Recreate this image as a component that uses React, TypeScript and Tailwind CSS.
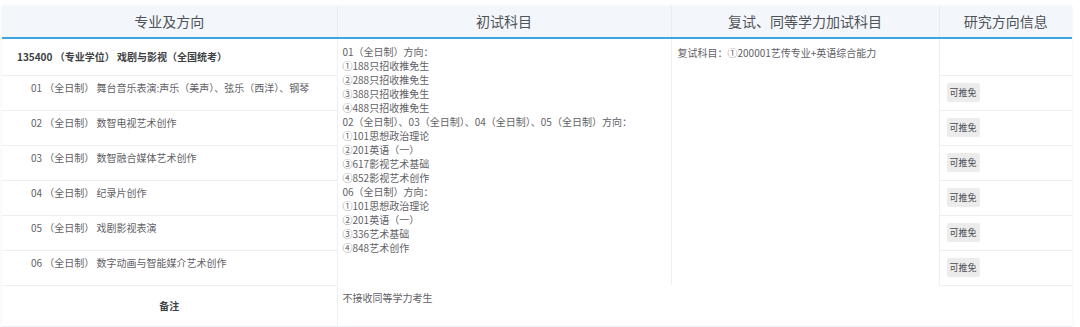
import React from "react";

const majors = [
  "01 （全日制） 舞台音乐表演:声乐（美声）、弦乐（西洋）、钢琴",
  "02 （全日制） 数智电视艺术创作",
  "03 （全日制） 数智融合媒体艺术创作",
  "04 （全日制） 纪录片创作",
  "05 （全日制） 戏剧影视表演",
  "06 （全日制） 数字动画与智能媒介艺术创作",
];

const firstExam = [
  "01（全日制）方向：",
  "①188只招收推免生",
  "②288只招收推免生",
  "③388只招收推免生",
  "④488只招收推免生",
  "02（全日制）、03（全日制）、04（全日制）、05（全日制）方向：",
  "①101思想政治理论",
  "②201英语（一）",
  "③617影视艺术基础",
  "④852影视艺术创作",
  "06（全日制）方向：",
  "①101思想政治理论",
  "②201英语（一）",
  "③336艺术基础",
  "④848艺术创作",
];

const App: React.FC = () => {
  return (
    <div className="w-[1080px] h-[327px] bg-white pt-[6px] px-[2px] font-['Noto_Sans_CJK_SC','Noto_Sans',sans-serif] text-[#5f6166]">
      <table className="w-[1070px] table-fixed border-collapse shadow-[0_0_4px_rgba(0,0,0,0.06)]">
        <colgroup>
          <col className="w-[335px]" />
          <col className="w-[334px]" />
          <col className="w-[268px]" />
          <col className="w-[133px]" />
        </colgroup>
        <thead>
          <tr className="h-[32px] bg-[#f3f7fc] border-b-2 border-[#3aa6dd]">
            <th className="font-normal text-[14px] text-[#505357] border-r border-[#e9edf2]">专业及方向</th>
            <th className="font-normal text-[14px] text-[#505357] border-r border-[#e9edf2]">初试科目</th>
            <th className="font-normal text-[14px] text-[#505357] border-r border-[#e9edf2]">复试、同等学力加试科目</th>
            <th className="font-normal text-[14px] text-[#505357]">研究方向信息</th>
          </tr>
        </thead>
        <tbody className="text-[10px] leading-[14px]">
          <tr className="h-[37px]">
            <td className="pl-[15px] font-bold text-[#3d3f43] border-b border-r border-[#eceff3]">
              135400 （专业学位） 戏剧与影视（全国统考）
            </td>
            <td rowSpan={7} className="align-top pt-[6px] px-[5px] border-r border-[#eceff3]">
              {firstExam.map((line, i) => (
                <div key={i}>{line}</div>
              ))}
            </td>
            <td rowSpan={7} className="align-top pt-[7px] px-[6px] border-r border-[#eceff3]">
              复试科目：①200001艺传专业+英语综合能力
            </td>
            <td className="border-b border-[#eceff3]"></td>
          </tr>
          {majors.map((name, i) => (
            <tr key={i} className="h-[35px]">
              <td className="pl-[29px] pb-[10px] border-b border-r border-[#eceff3]">{name}</td>
              <td className="px-[7px] border-b border-[#eceff3]">
                <span className="inline-flex items-center h-[19px] px-[3px] bg-[#ececec] rounded-[2px] text-[9px] text-[#4a4c50]">
                  可推免
                </span>
              </td>
            </tr>
          ))}
          <tr className="h-[41px] border-b border-[#eceff3]">
            <td className="text-center font-bold text-[#3d3f43] border-r border-[#eceff3]">备注</td>
            <td colSpan={3} className="align-top pt-[5px] px-[5px]">不接收同等学力考生</td>
          </tr>
        </tbody>
      </table>
    </div>
  );
};

export default App;
